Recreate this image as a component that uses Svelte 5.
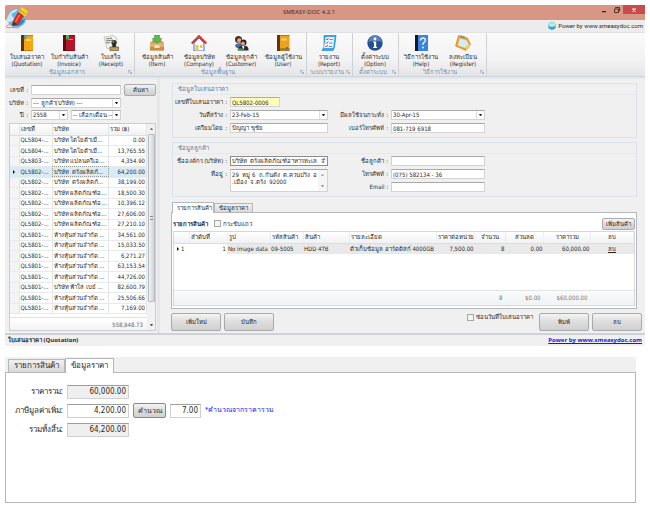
<script>
  const ribbon = [
    { name: 'ข้อมูลเอกสาร', items: [
      ['ใบเสนอราคา', '(Quotation)', 'bookYellow'],
      ['ใบกำกับสินค้า', '(Invoice)', 'bookRed'],
      ['ใบเสร็จ', '(Receipt)', 'receipt'] ] },
    { name: 'ข้อมูลพื้นฐาน', items: [
      ['ข้อมูลสินค้า', '(Item)', 'box'],
      ['ข้อมูลบริษัท', '(Company)', 'house'],
      ['ข้อมูลลูกค้า', '(Customer)', 'people'],
      ['ข้อมูลผู้ใช้งาน', '(User)', 'bookUser'] ] },
    { name: 'ระบบรายงาน', items: [['รายงาน', '(Report)', 'report']] },
    { name: 'ตั้งค่าระบบ', items: [['ตั้งค่าระบบ', '(Option)', 'info']] },
    { name: 'วิธีการใช้งาน', items: [
      ['วิธีการใช้งาน', '(Help)', 'help'],
      ['ลงทะเบียน', '(Register)', 'register'] ] }
  ];

  const quotes = [
    ['QL5804-...', 'บริษัท โตโยต้าเมื...', '0.00'],
    ['QL5804-...', 'บริษัท โตโยต้าเมื...', '13,765.55'],
    ['QL5803-...', 'บริษัท แปลนครีเอ...', '4,354.90'],
    ['QL5802-...', 'บริษัท  ตรังผลิตภั...', '64,200.00'],
    ['QL5802-...', 'บริษัท  ตรังผลิตภั...', '38,199.00'],
    ['QL5802-...', 'บริษัท ผลิตภัณฑ์อ...', '18,500.30'],
    ['QL5802-...', 'บริษัท ผลิตภัณฑ์อ...', '10,396.12'],
    ['QL5802-...', 'บริษัท ผลิตภัณฑ์อ...', '27,606.00'],
    ['QL5802-...', 'บริษัท ผลิตภัณฑ์อ...', '27,210.10'],
    ['QL5801-...', 'ห้างหุ้นส่วนจำกัด ...', '34,561.00'],
    ['QL5801-...', 'ห้างหุ้นส่วนจำกัด ...', '15,033.50'],
    ['QL5801-...', 'ห้างหุ้นส่วนจำกัด ...', '6,271.27'],
    ['QL5801-...', 'ห้างหุ้นส่วนจำกัด ...', '63,153.54'],
    ['QL5801-...', 'ห้างหุ้นส่วนจำกัด ...', '44,726.00'],
    ['QL5801-...', 'บริษัท ฟ้าใส เบย์ ...', '82,600.79'],
    ['QL5801-...', 'ห้างหุ้นส่วนจำกัด ...', '25,506.66'],
    ['QL5801-...', 'ห้างหุ้นส่วนจำกัด ...', '7,169.00']
  ];
  const selected = 3;
</script>

{#snippet icon(kind)}
  <svg class="icon" viewBox="0 0 16 16" aria-hidden="true">
    {#if kind === 'bookYellow'}
      <path d="M2 0h12v16H2z" fill="#f3a712" /><path d="M2 0h3v16H2z" fill="#5a3312" />
      <path d="M5 0h9v1H5zM5 15h9v1H5z" fill="#c77d08" /><path d="M7 4h5v2H7z" fill="#ffd66b" />
      <path d="M5 0h3l-1.5 5L5 3z" fill="#3b9fd0" />
    {:else if kind === 'bookRed'}
      <path d="M2 0h12v16H2z" fill="#b5152b" /><path d="M2 0h3v16H2z" fill="#5b0c14" />
      <path d="M5 0h9v1H5zM5 15h9v1H5z" fill="#8c0c1e" /><path d="M8 4h4v1H8z" fill="#e37a86" />
      <path d="M5 0h3v5L6.500 4 5 5z" fill="#4fb04a" />
    {:else if kind === 'receipt'}
      <path d="M1 2l9-1.500 4 3-1 9-9 1z" fill="#f2f2f0" stroke="#a9a9a6" stroke-width=".6" />
      <path d="M3 4l6-1M3 6l7-1M3 8l4-.5" stroke="#777" stroke-width="1" />
      <circle cx="11" cy="7.500" r="2.600" fill="#333" /><path d="M9.800 9h2.500l.8 3h-4z" fill="#1f1f1f" />
      <path d="M7 12h8.500v3.500H7z" fill="#c3a05b" stroke="#5b431a" stroke-width=".6" />
      <circle cx="10.300" cy="6.800" r=".8" fill="#bbb" />
    {:else if kind === 'box'}
      <path d="M1 8l3-3h8l3 3z" fill="#c5955a" /><path d="M1 8h14v7.500H1z" fill="#e1b06c" />
      <path d="M1 12h14v3.500H1z" fill="#c68f4b" /><path d="M5.500 10h5v3h-5z" fill="#f7e5bd" />
      <path d="M5.500 0h5v3.500H13L8 8.500 3 3.500h2.500z" fill="#56bd46" stroke="#359033" stroke-width=".5" />
    {:else if kind === 'house'}
      <path d="M3 8l5-5 5 5v8H3z" fill="#f8fbff" stroke="#4a6fd4" stroke-width="1" />
      <path d="M.7 8.500L8 1l7.300 7.500" fill="none" stroke="#e22d20" stroke-width="1.900" />
      <path d="M4.500 10h3v5.500h-3z" fill="#f3c536" /><path d="M9 10h2.500v3H9z" fill="#f3c536" />
    {:else if kind === 'people'}
      <circle cx="5.500" cy="4.500" r="3.500" fill="#4a2f22" /><circle cx="6.300" cy="5.500" r="2.200" fill="#e3ab82" />
      <path d="M2 10q3-3 7-1v4H4q-2-1-2-3z" fill="#466aa5" />
      <circle cx="10.500" cy="7.500" r="3" fill="#20222a" /><circle cx="10" cy="8.600" r="2" fill="#dda274" />
      <path d="M5 15.500q0-5 5.500-5t5 5z" fill="#262a34" /><path d="M9 11h2.500l-1.200 4z" fill="#fff" /><path d="M4.500 13.500h5v2h-5z" fill="#4ca24b" />
    {:else if kind === 'bookUser'}
      <path d="M2 0h12.500v16H2z" fill="#eda21c" /><path d="M2 0h3v16H2z" fill="#5c3615" />
      <path d="M5 0h9.500v1H5zM5 13h9.500v3H5z" fill="#b97712" /><path d="M6.500 3.500h5v2h-5z" fill="#ffd780" /><path d="M11 12h2v3l-1-.8-1 .8z" fill="#3a78ba" />
    {:else if kind === 'report'}
      <path d="M3 .5h12l-1.500 12L12 15.500H1L3 12z" fill="#35a9e8" stroke="#1c79bd" stroke-width=".6" />
      <path d="M4.500 2h9l-1.300 11H3z" fill="#eaf7ff" />
      <path d="M5 4l1 1 1.500-2M4.700 7.500l1 1 1.500-2M4.300 11l1 1 1.500-2" fill="none" stroke="#dd3030" stroke-width=".9" />
      <path d="M8.500 4.500H12M8.200 8h3.500M7.800 11.500h3.500" stroke="#3f9bd3" stroke-width="1" />
    {:else if kind === 'info'}
      <circle cx="8" cy="8" r="7.700" fill="#264f91" /><path d="M1.500 7a6.500 6.500 0 0 1 13 0q-6-2-13 0z" fill="#5c80ba" />
      <circle cx="8" cy="4" r="1.400" fill="#fff" /><path d="M6 6.500h3.200V12h1V13H6v-1h1V7.500H6z" fill="#fff" />
    {:else if kind === 'help'}
      <path d="M2 0h13v16H2z" fill="#3c83df" /><path d="M2 0h3v16H2z" fill="#10182b" />
      <path d="M7.500 5.500q.2-2.500 2.500-2.500t2.400 2.200q0 1.400-1.300 2.200T10 9.800" fill="none" stroke="#e5f2ff" stroke-width="1.500" />
      <circle cx="10" cy="12.500" r="1" fill="#e5f2ff" />
    {:else if kind === 'register'}
      <path d="M3.500.5l9 2.500 3 6.500-4.500 6L.5 11z" fill="#f2a020" stroke="#ce7e18" stroke-width=".6" />
      <path d="M4.500 3.200l7 2 2.500 4.800-4 3L3 10.500z" fill="#d3ecf9" /><path d="M5.500.3l4.500 1.200-.7 2-4.500-1.200z" fill="#7e97a8" />
      <path d="M11 10.500l4.500-1-4.500 6z" fill="#ffd04c" />
    {/if}
  </svg>
{/snippet}

<div class="page">
  <section class="window">
    <header class="titlebar">
      <svg class="logo" viewBox="0 0 22 22" aria-hidden="true">
        <circle cx="10.500" cy="11" r="9.500" fill="#64b5e8" />
        <path d="M2 9q3-7 10-7-2 3-5 4t0 4-3 5-2-6z" fill="#c6e8f8" />
        <path d="M11 19q6-1 8-7l-5 2z" fill="#2f83c6" />
        <path d="M12 5l6 4-6 9-5-4z" fill="#d92a1c" /><path d="M13.500 8l-4 7" stroke="#ff8a66" stroke-width="1.200" />
        <path d="M13 4l3-4 6 4-3 6z" fill="#f8d21c" /><path d="M14 3l5 4" stroke="#c39106" stroke-width="1" />
        <path d="M7 14l-1 5 6-1z" fill="#4a3326" /><path d="M6 18q-4-1-5.500 1T6 20.500l7 .5" fill="none" stroke="#ec8680" stroke-width="1" />
      </svg>
      <h1>SMEASY-DOC 4.2.1</h1>
      <div class="controls">
        <button aria-label="Minimize"><svg viewBox="0 0 8 8"><path d="M2 5h4v1.300H2z" fill="#3d2b27" /></svg></button>
        <button aria-label="Restore"><svg viewBox="0 0 8 8"><path d="M2.500 2.500v-1h4v3.500h-1M1.500 3h4v3.500h-4z" fill="none" stroke="#3d2b27" stroke-width=".9" /></svg></button>
        <button class="close" aria-label="Close"><svg viewBox="0 0 8 8"><path d="M2.500 2.500l3 3m0-3l-3 3" stroke="#fff" stroke-width="1.100" /></svg></button>
      </div>
    </header>
    <div class="powered">
      <svg viewBox="0 0 8 8" aria-hidden="true"><circle cx="4" cy="4" r="3.800" fill="#2fa9c4" /><path d="M.6 4a3.400 3.400 0 0 1 6.800 0q-3.400 1.500-6.800 0z" fill="#bdeaf2" /></svg>
      <span>Power by www.smeasydoc.com</span>
    </div>
    <nav class="ribbon">
      {#each ribbon as group}
        <div class="group">
          <div class="items">
            {#each group.items as [th, en, kind]}
              <button class="tool">{@render icon(kind)}<span>{th}</span><span>{en}</span></button>
            {/each}
          </div>
          <div class="group-name">
            <span>{group.name}</span>
            <svg viewBox="0 0 5 5" aria-hidden="true"><path d="M.5 4V.5H4M2 2l2.500 2.500M4.500 2.500v2h-2" fill="none" stroke="#8d99a8" stroke-width=".8" /></svg>
          </div>
        </div>
      {/each}
    </nav>

    <main class="body">
      <aside>
        <form class="search">
          <label for="no">เลขที่ :</label>
          <input id="no" class="field" />
          <button type="button" class="btn find">ค้นหา</button>
          <label for="company">บริษัท :</label>
          <span class="pick"><select id="company" class="field"><option>--- ลูกค้า(บริษัท) ---</option></select></span>
          <label class="row3" for="year">ปี :</label>
          <div class="pair row3">
            <span class="pick year"><select id="year" class="field"><option>2558</option></select></span>
            <span class="pick"><select class="field" aria-label="เดือน"><option>-- เลือกเดือน --</option></select></span>
          </div>
        </form>
        <div class="list">
          <div class="list-main">
            <table>
              <colgroup><col class="c-mark" /><col class="c-id" /><col /><col class="c-sum" /></colgroup>
              <thead><tr><th></th><th>เลขที่</th><th>บริษัท</th><th>รวม (฿)</th></tr></thead>
              <tbody>
                {#each quotes as [id, company, sum], i}
                  <tr class:selected={i === selected}>
                    <td>{#if i === selected}<i class="marker"></i>{/if}</td>
                    <td>{id}</td><td class="name">{company}</td><td class="num">{sum}</td>
                  </tr>
                {/each}
              </tbody>
            </table>
            <div class="total">558,948.73</div>
          </div>
          <div class="scroll"><i class="up"></i><div class="thumb"><i></i></div><i class="down"></i></div>
        </div>
      </aside>

      <div class="detail">
        <section class="card">
          <h2>ข้อมูลใบเสนอราคา</h2>
          <div class="form">
            <label for="qno">เลขที่ใบเสนอราคา :</label>
            <input id="qno" class="field yellow" value="QL5802-0006" />
            <label class="left" for="created">วันที่สร้าง :</label>
            <span class="pick"><select id="created" class="field"><option>23-Feb-15</option></select></span>
            <label for="until">มีผลใช้จนกระทั่ง :</label>
            <span class="pick"><select id="until" class="field"><option>30-Apr-15</option></select></span>
            <label for="by">เตรียมโดย :</label>
            <input id="by" class="field" value="ปัญญา ขุชัย" />
            <label for="tel">เบอร์โทรศัพท์ :</label>
            <input id="tel" class="field" value="081-719 6918" />
          </div>
        </section>
        <section class="card">
          <h2>ข้อมูลลูกค้า</h2>
          <div class="form">
            <label for="org">ชื่อองค์กร (บริษัท) :</label>
            <input id="org" class="field dark" value="บริษัท  ตรังผลิตภัณฑ์อาหารทะเล  จำกัด" />
            <label for="cust">ชื่อลูกค้า :</label>
            <input id="cust" class="field" />
            <label for="addr">ที่อยู่ :</label>
            <div class="area">
              <textarea id="addr" value={'29  หมู่ 6  ถ.กันตัง  ต.ควนปริง  อ\n.เมือง  จ.ตรัง  92000'}></textarea>
              <div class="area-bar"><i class="up"></i><i class="down"></i></div>
            </div>
            <label for="phone">โทรศัพท์ :</label>
            <input id="phone" class="field" value="(075) 582134 - 36" />
            <label class="right" for="email">Email :</label>
            <input id="email" class="field" />
          </div>
        </section>

        <section class="items-panel">
          <div class="tabs"><button class="tab active">รายการสินค้า</button><button class="tab">ข้อมูลราคา</button></div>
          <div class="sheet">
            <div class="sheet-head">
              <h3>รายการสินค้า</h3>
              <label class="check"><input type="checkbox" />กระชับแถว</label>
              <button class="btn add">เพิ่มสินค้า</button>
            </div>
            <div class="grid">
              <table>
                <colgroup>
                  <col class="g1" /><col class="g2" /><col class="g3" /><col class="g4" /><col class="g5" /><col />
                  <col class="g2" /><col class="g7" /><col class="g2" /><col class="g8" /><col class="g3" />
                </colgroup>
                <thead><tr>
                  <th></th><th>ลำดับที่</th><th>รูป</th><th>รหัสสินค้า</th><th>สินค้า</th><th>รายละเอียด</th>
                  <th class="num">ราคาต่อหน่วย</th><th class="mid">จำนวน</th><th class="mid">ส่วนลด</th><th class="mid">ราคารวม</th><th class="mid">ลบ</th>
                </tr></thead>
                <tbody><tr>
                  <td class="plain"><i class="marker"></i>1</td><td class="num plain">1</td><td>No image data</td><td>09-5005</td><td>HDD 4TB</td>
                  <td>ตัวเก็บข้อมูล ฮาร์ดดิสก์ 4000GB</td><td class="num">7,500.00</td><td class="num">8</td><td class="num">0.00</td>
                  <td class="num">60,000.00</td><td class="mid"><a href="#delete">ลบ</a></td>
                </tr></tbody>
                <tfoot>
                  <tr class="blank"><td colspan="11"></td></tr>
                  <tr class="sums"><td colspan="7"></td><td class="num">8</td><td class="num">$0.00</td><td class="num">$60,000.00</td><td></td></tr>
                </tfoot>
              </table>
            </div>
          </div>
        </section>

        <div class="actions">
          <button class="btn big">เพิ่มใหม่</button>
          <button class="btn big">บันทึก</button>
          <label class="check push"><input type="checkbox" />ซ่อนวันที่ใบเสนอราคา</label>
          <button class="btn big">พิมพ์</button>
          <button class="btn big">ลบ</button>
        </div>
      </div>
    </main>
    <footer class="status"><span>ใบเสนอราคา (Quotation)</span><a href="#home">Power by www.smeasydoc.com</a></footer>
  </section>

  <section class="price">
    <div class="tabs"><button class="tab">รายการสินค้า</button><button class="tab active">ข้อมูลราคา</button></div>
    <div class="price-sheet">
      <label for="sub">ราคารวม:</label>
      <div><input id="sub" class="money grey" value="60,000.00" readonly /></div>
      <label for="vat">ภาษีมูลค่าเพิ่ม:</label>
      <div>
        <input id="vat" class="money" value="4,200.00" />
        <button class="btn calc">คำนวณ</button>
        <input class="money rate" aria-label="อัตราภาษี" value="7.00" />
        <span class="note">*คำนวณจากราคารวม</span>
      </div>
      <label for="grand">รวมทั้งสิ้น:</label>
      <div><input id="grand" class="money grey" value="64,200.00" readonly /></div>
    </div>
  </section>
</div>

<style>
  :global(body) { background: #fff; }
  .page { padding: 5px; font: 6px/8px "DejaVu Sans Condensed", "DejaVu Sans", sans-serif; color: #2b2b2b; }
  .page * { box-sizing: border-box; }
  button, input, select, textarea { font: inherit; color: inherit; margin: 0; padding: 0; border: 0; border-radius: 0; outline: 0; }
  h1, h2, h3 { margin: 0; font-weight: normal; font-size: inherit; }
  i { display: inline-block; }
  svg { display: block; }

  .window { background: #f0f0f0; border-radius: 2px; }
  .titlebar { position: relative; display: flex; align-items: flex-start; height: 15px; background: #d89684; border-radius: 2px 2px 0 0; }
  .logo { position: absolute; left: 1px; top: 2px; width: 22px; height: 22px; z-index: 1; }
  h1 { flex: 1; text-align: center; font: 6px/15px "Open Sans", "Noto Sans", sans-serif; padding-left: 16px; }
  .controls { display: flex; }
  .controls button { width: 13px; height: 9px; background: none; display: grid; place-items: center; }
  .controls svg { width: 8px; height: 8px; }
  .controls .close { width: 22px; background: #c94b4b; }
  .powered { display: flex; justify-content: flex-end; align-items: center; gap: 2px; height: 12px; padding-right: 2px; background: #ececec; font-family: Roboto, "Liberation Sans", sans-serif; }
  .powered svg { width: 8px; height: 8px; }

  .ribbon { display: flex; height: 45px; background: linear-gradient(#fafafa, #f3f3f4 60%, #e4e5e7); border-top: 1px solid #e2e2e2; border-bottom: 1px solid #cdd3d8; }
  .group { border-right: 1px solid #cfd1d4; padding: 0 2px 0 1px; display: flex; flex-direction: column; }
  .items { display: flex; flex: 1; }
  .tool { width: 42px; background: none; display: flex; flex-direction: column; align-items: center; padding-top: 2px; line-height: 7px; white-space: nowrap; }
  .icon { width: 16px; height: 16px; margin-bottom: 2px; }
  .group-name { display: flex; align-items: center; height: 10px; color: #7d8ea5; line-height: 7px; }
  .group-name span { flex: 1; text-align: center; white-space: nowrap; }
  .group-name svg { width: 4px; height: 4px; }

  .body { display: flex; background: #f0f0f0; border-top: 2px solid #e2e8ec; border-bottom: 2px solid #cdd2d6; }
  aside { width: 155px; padding: 5px 1px 2px 4px; border-right: 3px solid #e3e7ea; flex: none; }
  .search { display: grid; grid-template-columns: 22px 90px 1fr; grid-template-rows: 12px 10px 10px; gap: 2px 3px; align-items: center; margin-left: -3px; }
  .search label, .form label { text-align: right; white-space: nowrap; }
  .search .row3 { grid-column: 1; }
  .search .pair { grid-column: 2; display: flex; gap: 3px; }
  .search .year { width: 37px; flex: none; }
  .field { display: block; width: 100%; height: 10px; background: #fff; border: 1px solid #d3d3d3; border-top-color: #a9a9a9; padding: 0 1px; line-height: 8px; appearance: none; }
  .pick { position: relative; display: block; flex: 1; }
  .pick::before { content: ""; position: absolute; right: 8px; top: 1px; height: 8px; border-left: 1px solid #ddd; }
  .pick::after { content: ""; position: absolute; right: 3px; top: 4px; border: 1px solid transparent; border-top: 2px solid #222; border-bottom: 0; width: 1px; }
  .btn { background: linear-gradient(#f4f4f4, #dcdcdc 50%, #d0d0d0); border: 1px solid #aaa; border-radius: 2px; text-align: center; white-space: nowrap; line-height: 8px; }
  .find { height: 12px; }

  .list { display: flex; margin-top: 3px; border: 1px solid #c9cdd0; background: #fff; }
  .list-main { flex: 1; min-width: 0; }
  table { width: 100%; border-collapse: collapse; table-layout: fixed; }
  th, td { padding: 0 1px; height: 10px; line-height: 8px; font-weight: normal; text-align: left; white-space: nowrap; overflow: hidden; }
  th { height: 11px; background: linear-gradient(#fff, #f0f1f2); border-bottom: 1px solid #dcdfe2; border-right: 1px solid #e4e6e8; }
  .list td { border-right: 1px solid #e3e5e7; border-bottom: 1px solid #e8eaec; }
  .list .name { white-space: pre; }
  .list tbody tr:nth-child(even) td { height: 11px; }
  .list td:first-child { background: #f3f4f5; }
  .list .selected td { background: #d9ebf4; }
  .list .selected .name { outline: 1px dotted #999; outline-offset: -1px; }
  .c-mark { width: 9px; } .c-id { width: 33px; } .c-sum { width: 38px; }
  .num { text-align: right; }
  .mid { text-align: center; }
  .marker { border: 2px solid transparent; border-left: 2px solid #111; border-right: 0; margin: 0 2px; }
  .total { margin-top: 3px; height: 13px; padding: 3px 4px 0 0; text-align: right; color: #666; background: linear-gradient(#fff, #f2f3f5); border-top: 1px solid #dfe2e4; }
  .scroll { width: 8px; background: #f1f1f1; display: flex; flex-direction: column; align-items: center; padding: 4px 0; gap: 4px; }
  .thumb { width: 7px; flex: 1; margin-bottom: 18px; border: 1px solid #b7bbbf; border-radius: 1px; background: linear-gradient(90deg, #f2f3f4, #cfd3d7); display: grid; place-items: center; }
  .thumb i { width: 3px; height: 4px; border: solid #888; border-width: 1px 0; }
  .up { border: 1px solid transparent; border-bottom: 2px solid #777; border-top: 0; width: 3px; }
  .down { border: 1px solid transparent; border-top: 2px solid #555; border-bottom: 0; width: 3px; }

  .detail { flex: 1; min-width: 0; padding: 4px 3px 1px 11px; display: flex; flex-direction: column; }
  .card { height: 55px; margin: 0 5px 4px 1px; border: 1px solid #dce3e8; }
  h2 { color: #5d789b; padding-left: 5px; line-height: 10px; margin-bottom: 2px; border-bottom: 1px solid #e6eaed; }
  .form { display: grid; grid-template-columns: 54px 98px 57px 94px; column-gap: 3px; row-gap: 3px; grid-auto-rows: 10px; align-items: center; }
  .form .left { grid-column: 1; }
  .form .right { grid-column: 3; }
  .yellow { background: #ffffb8; width: 50px; }
  .dark { border-color: #8c8c8c; }
  .area { grid-row: span 2; height: 23px; align-self: start; display: flex; border: 1px solid #d3d3d3; border-top-color: #a9a9a9; background: #fff; }
  .area textarea { flex: 1; min-width: 0; resize: none; background: #fff; overflow: hidden; line-height: 7px; padding: 1px; white-space: pre; }
  .area-bar { width: 9px; background: #f0f0f0; display: flex; flex-direction: column; justify-content: space-between; align-items: center; padding: 4px 0; opacity: .6; }

  .tabs { display: flex; align-items: flex-end; padding-left: 1px; }
  .tab { height: 9px; padding: 0 4px; background: linear-gradient(#f0f0f0, #d9d9d9); border: 1px solid #b4b8bc; border-bottom: 0; white-space: nowrap; }
  .tab.active { height: 11px; background: #fff; margin-bottom: -1px; position: relative; }
  .items-panel { margin: 0 5px 4px 0; }
  .items-panel .tabs { height: 11px; }
  .items-panel .active { width: 42px; }
  .sheet { background: #fff; border: 1px solid #b4b8bc; padding: 3px 1px 2px; }
  .sheet-head { display: flex; align-items: center; height: 15px; gap: 6px; }
  h3 { font-weight: bold; }
  .check { display: flex; align-items: center; gap: 2px; white-space: nowrap; }
  .check input { width: 7px; height: 7px; appearance: none; background: #f4f4f4; border: 1px solid #a8a8a8; }
  .add { width: 33px; height: 12px; margin-left: auto; }
  .grid { border: 1px solid #d5d8db; }
  .grid th { border-right-color: #eceef0; }
  .grid tbody td { background: #e9e9e9; height: 11px; }
  .grid tbody .plain { background: #fff; }
  .grid .blank td { height: 36px; }
  .grid .sums td { height: 15px; color: #777; background: linear-gradient(#fafbfb, #eff1f3); border-top: 1px solid #e1e3e5; padding-right: 3px; }
  .grid a { color: inherit; }
  .g1 { width: 15px; } .g2 { width: 38px; } .g3 { width: 43px; } .g4 { width: 33px; } .g5 { width: 46px; } .g7 { width: 31px; } .g8 { width: 47px; }

  .actions { display: flex; gap: 3px; align-items: flex-start; }
  .big { width: 50px; height: 18px; }
  .push { margin-left: auto; margin-right: 3px; }
  .status { display: flex; justify-content: space-between; align-items: center; height: 11px; padding: 0 3px; font-weight: bold; font-family: "Open Sans", "Noto Sans", sans-serif; }
  .status a { color: #1616e8; }

  .price { margin: 11px 4px 0 0; font-size: 8px; line-height: 11px; margin-right: 9px; }
  .price .tabs { background: #f0f0f0; height: 15px; padding-left: 3px; }
  .price .tab { height: 13px; padding: 0 5px; }
  .price .active { height: 15px; }
  .price-sheet { border: 1px solid #b4b8bc; background: #fff; height: 131px; padding: 12px 0 0 6px; display: grid; grid-template-columns: 51px 1fr; column-gap: 4px; row-gap: 5px; grid-auto-rows: 14px; align-content: start; align-items: center; }
  .price-sheet label { text-align: right; white-space: nowrap; }
  .price-sheet div { display: flex; align-items: center; gap: 4px; }
  .money { width: 62px; height: 14px; border: 1px solid #d0d0d0; border-top-color: #9e9e9e; padding: 0 2px; text-align: right; background: #fff; }
  .grey { background: #efefef; }
  .rate { width: 31px; }
  .calc { width: 33px; height: 15px; font-size: 7px; border-color: #888; }
  .note { color: #1414f0; font-size: 7px; }
</style>
